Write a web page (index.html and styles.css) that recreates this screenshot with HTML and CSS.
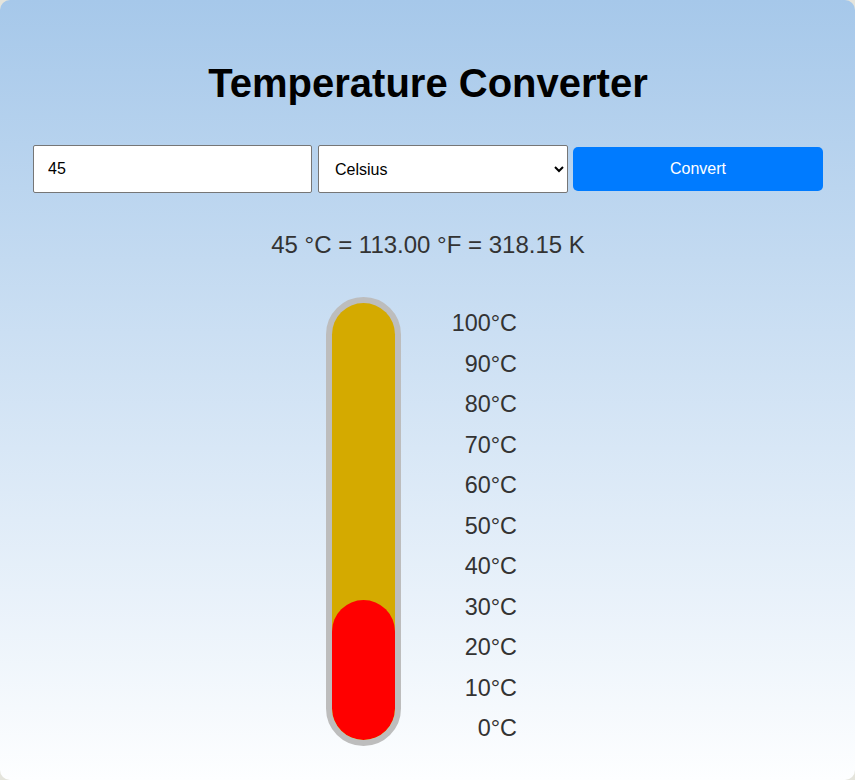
FILE: index.html
```html
<!DOCTYPE html>
<html lang="en">
<head>
<meta charset="utf-8">
<title>Temperature Converter</title>
<link rel="stylesheet" href="styles.css">
</head>
<body>
<div class="app">
  <h1 class="title">Temperature Converter</h1>
  <div class="controls">
    <input class="temp-input" type="text" value="45">
    <select class="unit-select">
      <option>Celsius</option>
      <option>Fahrenheit</option>
      <option>Kelvin</option>
    </select>
    <button class="convert-btn">Convert</button>
  </div>
  <p class="result">45 °C = 113.00 °F = 318.15 K</p>
  <div class="gauge">
    <div class="tube">
      <div class="tube-inner">
        <div class="mercury" style="height: 140px"></div>
      </div>
    </div>
    <ul class="scale">
      <li>100°C</li>
      <li>90°C</li>
      <li>80°C</li>
      <li>70°C</li>
      <li>60°C</li>
      <li>50°C</li>
      <li>40°C</li>
      <li>30°C</li>
      <li>20°C</li>
      <li>10°C</li>
      <li>0°C</li>
    </ul>
  </div>
</div>
</body>
</html>
```

FILE: styles.css
```css
html, body {
  margin: 0;
  padding: 0;
}
body {
  background: #e4e4dc;
  font-family: "Liberation Sans", Arial, sans-serif;
}
.app {
  box-sizing: border-box;
  width: 855px;
  height: 780px;
  border-radius: 10px;
  background: linear-gradient(to bottom, #a6c8ea 0%, #fdfeff 100%);
  padding: 60px 32px 0 33px;
  overflow: hidden;
}
.title {
  margin: 0;
  font-size: 40px;
  font-weight: bold;
  line-height: 46px;
  text-align: center;
  color: #000;
}
.controls {
  display: flex;
  align-items: center;
  margin-top: 39px;
}
.temp-input {
  box-sizing: border-box;
  width: 279px;
  height: 48px;
  border: 1px solid #767676;
  border-radius: 2px;
  padding: 0 14px;
  font-family: "Liberation Sans", Arial, sans-serif;
  font-size: 16px;
  color: #000;
  background: #fff;
  margin: 0;
}
.unit-select {
  box-sizing: border-box;
  width: 250px;
  height: 48px;
  margin: 0 0 0 6px;
  border: 1px solid #767676;
  border-radius: 2px;
  padding: 0 12px;
  font-family: "Liberation Sans", Arial, sans-serif;
  font-size: 16px;
  color: #000;
  background: #fff;
}
.convert-btn {
  box-sizing: border-box;
  width: 250px;
  height: 44px;
  margin: 0 0 0 5px;
  border: none;
  border-radius: 5px;
  background: #007bff;
  color: #fff;
  font-family: "Liberation Sans", Arial, sans-serif;
  font-size: 16px;
}
.result {
  margin: 38px 0 0;
  font-size: 24px;
  line-height: 28px;
  text-align: center;
  color: #333;
}
.gauge {
  display: flex;
  justify-content: center;
  margin-top: 38px;
}
.tube {
  box-sizing: border-box;
  width: 75px;
  height: 449px;
  border: 6px solid #bdbdbd;
  border-radius: 38px;
  background: #bdbdbd;
}
.tube-inner {
  height: 100%;
  border-radius: 32px;
  background: #d4aa00;
  display: flex;
  flex-direction: column;
  justify-content: flex-end;
  overflow: hidden;
}
.mercury {
  background: #ff0000;
  border-radius: 32px;
}
.scale {
  list-style: none;
  margin: 0;
  padding: 6px 13px 0 0;
  width: 129px;
  box-sizing: border-box;
  text-align: right;
}
.scale li {
  font-size: 23.4px;
  line-height: 40.5px;
  color: #333;
}
```
